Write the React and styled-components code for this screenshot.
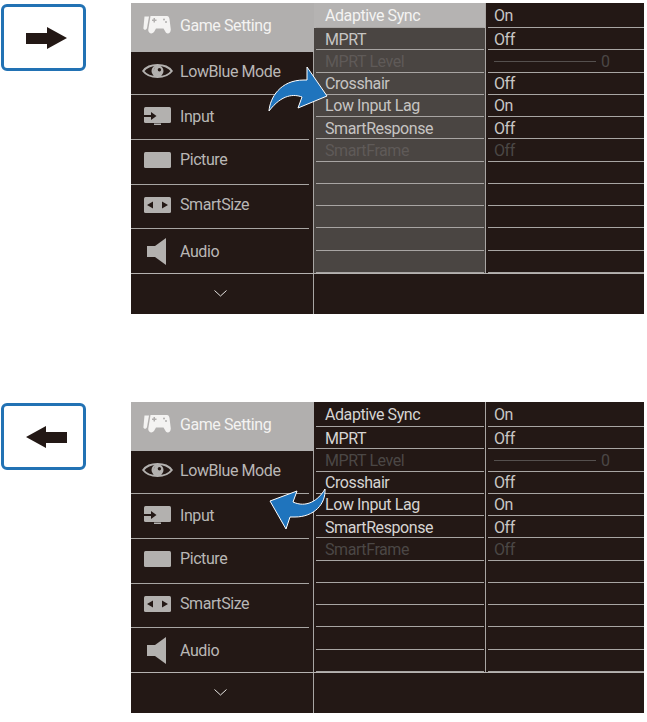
import React from "react";
import styled, { createGlobalStyle } from "styled-components";

const GlobalStyle = createGlobalStyle`
  body {
    background: #fff;
    margin: 0;
  }
`;

const Page = styled.div`
  display: flex;
  flex-direction: column;
  font-family: "Roboto", "Liberation Sans", sans-serif;
  font-size: 16px;
  gap: 88px;
  letter-spacing: -0.42px;
  padding-top: 3px;
`;

const Section = styled.section`
  display: flex;
`;

const KeyColumn = styled.div`
  flex: none;
  padding: 1px 0 0 1px;
  width: 130px;
`;

const KeyBox = styled.div`
  align-items: center;
  border: solid 3px #2272b4;
  border-radius: 6px;
  box-sizing: border-box;
  display: flex;
  height: 67px;
  justify-content: center;
  padding-left: 5px;
  width: 85px;
`;

const Panel = styled.div`
  background: #231815;
  display: flex;
  flex-direction: column;
  height: 311px;
  position: relative;
  width: 513px;
`;

const Body = styled.div`
  display: flex;
  height: 270px;
`;

const Sidebar = styled.div`
  border-right: solid 1px #a8a5a3;
  display: grid;
  flex: none;
  grid-template-rows: 49px 43px 45px 45px 44px 44px;
  width: 182px;
`;

const SideRow = styled.div`
  align-items: center;
  background: ${({ $active }) => ($active ? "#b1afae" : "none")};
  color: ${({ $active }) => ($active ? "#f4f3f2" : "#b9b7b5")};
  display: flex;
  margin-right: ${({ $active }) => ($active ? "-1px" : "0")};
  padding-bottom: ${({ $lift }) => $lift}px;
  padding-left: 10px;
  position: relative;

  &::after {
    background: #a8a5a3;
    bottom: 0;
    content: "";
    display: ${({ $ruled }) => ($ruled ? "block" : "none")};
    height: 1px;
    left: 0;
    position: absolute;
    right: 4px;
  }
`;

const IconSlot = styled.span`
  align-items: center;
  display: flex;
  flex: none;
  justify-content: center;
  margin-right: 7px;
  width: 32px;
`;

const MenuColumn = styled.div`
  background: ${({ $raised }) => ($raised ? "#4a4542" : "none")};
  border-right: solid 1px #a8a5a3;
  display: grid;
  flex: none;
  grid-template-rows: 25px repeat(11, 1fr);
  width: 171px;
`;

const MenuRow = styled.div`
  align-items: center;
  background: ${({ $selected }) => ($selected ? "#b5b3b2" : "none")};
  color: ${({ $tone }) => $tone};
  display: flex;
  padding-left: 11px;
  position: relative;

  &:first-child {
    padding-bottom: 1px;
  }

  &::after {
    background: #a8a5a3;
    bottom: 0;
    content: "";
    height: 1px;
    left: 2px;
    position: absolute;
    right: 1px;
  }
`;

const ValueColumn = styled.div`
  display: grid;
  flex: 1;
  grid-template-rows: 25px repeat(11, 1fr);
`;

const ValueRow = styled.div`
  align-items: center;
  color: ${({ $dim }) => ($dim ? "#4b4745" : "#c9c7c5")};
  display: flex;
  padding-left: 8px;
  position: relative;

  &:first-child {
    padding-bottom: 1px;
  }

  &::after {
    background: #a8a5a3;
    bottom: 0;
    content: "";
    height: 1px;
    left: 2px;
    position: absolute;
    right: 0;
  }
`;

const SliderTrack = styled.span`
  background: #55504e;
  height: 1px;
  margin-right: 5px;
  width: 102px;
`;

const Footer = styled.div`
  border-top: solid 1px #b5b2b0;
  display: flex;
  flex: 1;
`;

const FooterCell = styled.div`
  align-items: center;
  border-right: solid 1px #a8a5a3;
  box-sizing: border-box;
  display: flex;
  justify-content: center;
  padding: 0 4px 2px 0;
  width: 183px;
`;

const Swoosh = styled.svg`
  height: ${({ height }) => height}px;
  left: 135px;
  position: absolute;
  top: ${({ $top }) => $top}px;
  width: 64px;
`;

const GREY = "#b3b1af";
const DARK = "#231815";

const ArrowGlyph = ({ left }) => (
  <svg width="41" height="22" viewBox="0 0 41 22">
    <path
      d={left ? "M0 11L20 0V6H41V17H20V22Z" : "M41 11L21 0V6H0V17H21V22Z"}
      fill={DARK}
    />
  </svg>
);

const GameIcon = () => (
  <svg width="28" height="18" viewBox="0 0 28 18">
    <path d="M1.5 0.5H6L4 12C3.5 14 1.2 14.5 0.4 12.5Z" fill="#f4f3f2" />
    <path
      d="M7.5 0H24C25.5 0 26 1 26.5 3L27.8 13.5C27.8 17 25 18.5 23 16.8L20.5 12.5H13L11 16C9 18.5 5.5 17.5 5.2 14Z"
      fill="#f4f3f2"
    />
    <path d="M9 3.5H10.5V2H12V3.5H13.5V5H12V6.5H10.5V5H9Z" fill="#b1afae" />
    <circle cx="21" cy="3.5" r="1" fill="#b1afae" />
    <circle cx="23" cy="6" r="1" fill="#b1afae" />
  </svg>
);

const EyeIcon = () => (
  <svg width="31" height="18" viewBox="0 0 31 18">
    <path
      d="M1.2 9C7 1 24 1 29.8 9C24 17 7 17 1.2 9Z"
      fill="none"
      stroke={GREY}
      strokeWidth="2"
    />
    <circle cx="15.5" cy="9" r="6" fill={GREY} />
    <path d="M15 4.5A4.6 4.6 0 0 0 12 9.5A4 4 0 0 1 15 4.5Z" fill={DARK} />
    <circle cx="17.4" cy="7.8" r="1.7" fill={DARK} />
  </svg>
);

const InputIcon = () => (
  <svg width="28" height="19" viewBox="0 0 28 19">
    <rect x="1" y="0" width="27" height="16" rx="1.5" fill={GREY} />
    <rect x="11" y="16.5" width="7" height="1.5" fill={GREY} />
    <path d="M0 8H8V5L13.5 9L8 13V10H0Z" fill={DARK} />
  </svg>
);

const PictureIcon = () => (
  <svg width="27" height="16" viewBox="0 0 27 16">
    <rect width="27" height="16" rx="1.5" fill={GREY} />
  </svg>
);

const SizeIcon = () => (
  <svg width="27" height="16" viewBox="0 0 27 16">
    <rect width="27" height="16" rx="1.5" fill={GREY} />
    <path d="M3 8L9 4.5V11.5Z M24 8L18 4.5V11.5Z" fill={DARK} />
  </svg>
);

const AudioIcon = () => (
  <svg width="20" height="27" viewBox="0 0 20 27">
    <path d="M0 8H8L19 0V27L8 19H0Z" fill={GREY} />
  </svg>
);

const Chevron = () => (
  <svg width="13" height="7" viewBox="0 0 13 7">
    <path d="M0.5 0.5L6.5 6L12.5 0.5" fill="none" stroke="#e6e4e2" strokeWidth="1" />
  </svg>
);

const SIDE_ITEMS = [
  { label: "Game Setting", Icon: GameIcon, lift: 5, active: true },
  { label: "LowBlue Mode", Icon: EyeIcon, lift: 5, ruled: true },
  { label: "Input", Icon: InputIcon, lift: 3, ruled: true },
  { label: "Picture", Icon: PictureIcon, lift: 6, ruled: true },
  { label: "SmartSize", Icon: SizeIcon, lift: 5, ruled: true },
  { label: "Audio", Icon: AudioIcon, lift: 0 },
];

const SETTINGS = [
  { label: "Adaptive Sync", value: "On" },
  { label: "MPRT", value: "Off" },
  { label: "MPRT Level", value: "0", dim: true, slider: true },
  { label: "Crosshair", value: "Off" },
  { label: "Low Input Lag", value: "On" },
  { label: "SmartResponse", value: "Off" },
  { label: "SmartFrame", value: "Off", dim: true },
  ...Array.from({ length: 5 }, () => ({ label: "", value: "" })),
];

const GamePanel = ({ raised, children }) => (
  <Panel>
    <Body>
      <Sidebar>
        {SIDE_ITEMS.map(({ label, Icon, lift, active, ruled }) => (
          <SideRow key={label} $active={active} $lift={lift} $ruled={ruled}>
            <IconSlot>
              <Icon />
            </IconSlot>
            {label}
          </SideRow>
        ))}
      </Sidebar>
      <MenuColumn $raised={raised}>
        {SETTINGS.map(({ label, dim }, index) => {
          const selected = raised && index === 0;
          const lit = selected ? "#f4f3f2" : raised ? "#c6c4c2" : "#d6d4d2";
          return (
            <MenuRow
              key={index}
              $selected={selected}
              $tone={dim ? (raised ? "#5f5a58" : "#4b4745") : lit}
            >
              {label}
            </MenuRow>
          );
        })}
      </MenuColumn>
      <ValueColumn>
        {SETTINGS.map(({ value, dim, slider }, index) => (
          <ValueRow key={index} $dim={dim}>
            {slider && <SliderTrack />}
            {value}
          </ValueRow>
        ))}
      </ValueColumn>
    </Body>
    <Footer>
      <FooterCell>
        <Chevron />
      </FooterCell>
    </Footer>
    {children}
  </Panel>
);

const App = () => (
  <>
    <GlobalStyle />
    <Page>
      <Section>
        <KeyColumn>
          <KeyBox>
            <ArrowGlyph />
          </KeyBox>
        </KeyColumn>
        <GamePanel raised>
          <Swoosh $top={61} height={50} viewBox="0 0 64 50">
            <path
              d="M3 47C4 34 14 16 38 16L41 16L41 3L61 32L32 44L36 33C28 30 16 30 3 47Z"
              fill="#1f74bd"
              stroke="#fff"
              strokeWidth="1"
            />
          </Swoosh>
        </GamePanel>
      </Section>
      <Section>
        <KeyColumn>
          <KeyBox>
            <ArrowGlyph left />
          </KeyBox>
        </KeyColumn>
        <GamePanel>
          <Swoosh $top={84} height={46} viewBox="0 0 64 46">
            <path
              d="M4 15L31 5L27 16C40 22 52 15 59 3C60 18 48 31 29 31H24L20 43Z"
              fill="#1f74bd"
              stroke="#fff"
              strokeWidth="1"
            />
          </Swoosh>
        </GamePanel>
      </Section>
    </Page>
  </>
);

export default App;
